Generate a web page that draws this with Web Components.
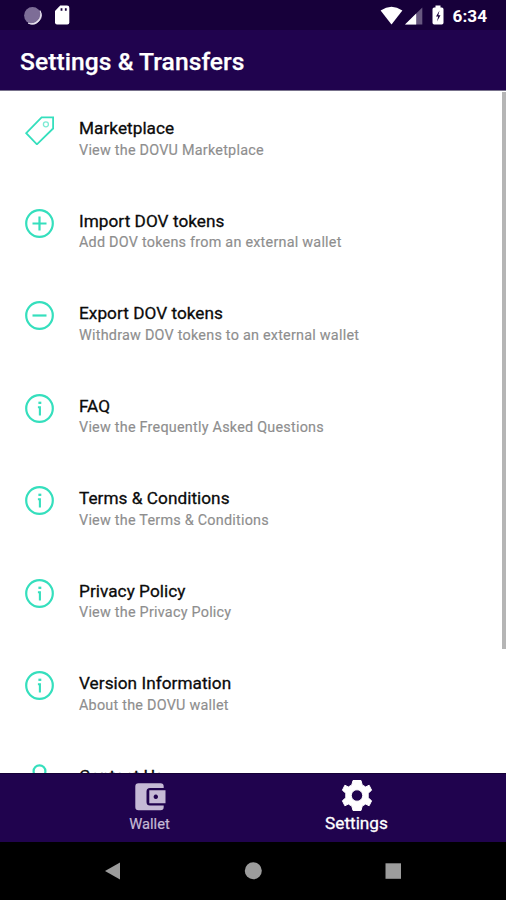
<!DOCTYPE html>
<html lang="en">
<head>
<meta charset="utf-8">
<title>Settings &amp; Transfers</title>
<style>
html,body{margin:0;padding:0;height:100%;overflow:hidden}
body{font-family:Roboto,"Liberation Sans",sans-serif;background:#000}
</style>
</head>
<body>
<wallet-app></wallet-app>
<script>
const define = (name, html) => customElements.define(name, class extends HTMLElement {
  constructor() {
    super();
    const t = document.createElement('template');
    t.innerHTML = typeof html === 'function' ? html(this) : html;
    this.attachShadow({mode: 'open'}).append(t.content.cloneNode(true));
  }
});

const glyphs = {
  tag: '<path d="M1.2 17.2 16.6 1.3h11.5v11.2L11.900 28.300z" stroke-width="1.8"/><circle cx="20.900" cy="8.300" r="2.500" stroke-width="1.300" opacity=".65"/>',
  plus: '<circle cx="14.5" cy="14.5" r="13.3"/><path d="M14.5 7.5v14M7.5 14.5h14"/>',
  minus: '<circle cx="14.5" cy="14.5" r="13.3"/><path d="M7.5 14.5h14"/>',
  info: '<circle cx="14.5" cy="14.5" r="13.3"/><path d="M12.900 13.200h2.200M14.900 12.200v9.300" stroke-width="2.100"/><path d="M13.400 8.800h2.900" stroke-width="2.300"/>',
  person: '<circle cx="14.5" cy="7.2" r="5.900"/><path d="M2 29c0-8 5-13 12.5-13S27 21 27 29"/>'
};

define('status-bar', `<style>
:host{display:flex;align-items:center;height:30px;background:#17003a;color:#fff;box-sizing:border-box;padding:0 19px 0 23px}
.left{display:flex;align-items:center;gap:12px;flex:1}
.right{display:flex;align-items:center}
svg{display:block}
.time{font-size:17.2px;font-weight:700;line-height:30px;margin-left:9px;padding-top:2px}
</style>
<div class="left">
<svg width="19" height="19" viewBox="0 0 19 19"><circle cx="9.5" cy="9.5" r="8.4" fill="#7d6d97"/><path d="M17 4.6A9 9 0 0 1 5.2 17.2 9.6 9.6 0 0 0 17 4.6z" fill="#eee8f4" stroke="#eee8f4" stroke-width=".8"/></svg>
<svg width="17" height="20" viewBox="0 0 17 20"><path d="M6.2.5H13q2.3 0 2.3 2.2v14.8q0 2-2 2H3q-2 0-2-2V6z" fill="#fff"/><path d="M7.500 3.200v2.600M11.800 3.200v2.600" stroke="#17003a" stroke-width="1.800"/></svg>
</div>
<div class="right">
<svg width="23" height="19" viewBox="0 0 23 19"><path d="M.6 4.4Q11.5-3 22.4 4.4L11.5 18.6z" fill="#fff"/></svg>
<svg width="19" height="19" viewBox="0 0 19 19" style="margin-left:1px"><path d="M1 18.5 18.3 1.5v17z" fill="#685880"/><path d="M1 18.5 12.2 7.5v11z" fill="#fff"/></svg>
<svg width="12" height="20" viewBox="0 0 12 20" style="margin-left:9px"><path d="M3.5.5h5v2h1.3q1.7 0 1.7 1.7v13.6q0 1.7-1.7 1.7H2.2Q.5 19.5.5 17.8V4.200q0-1.700 1.700-1.700h1.300z" fill="#fff"/><path d="M7.500 5.500 4 11.500h2.200L5 16.500l3.500-6.300H6.300z" fill="#17003a"/></svg>
<span class="time">6:34</span>
</div>`);

define('title-bar', `<style>
:host{display:flex;align-items:center;height:61px;background:#20034e;border-bottom:1px solid #77718b;padding:2px 20px 0;box-sizing:border-box;color:#fff;font-size:24.6px;font-weight:500;letter-spacing:.06px;-webkit-text-stroke:.25px #fff}
</style><slot></slot>`);

define('setting-row', el => `<style>
:host{display:flex;height:92.5px;box-sizing:border-box;padding:25px 20px 0 25px;gap:25px}
svg{display:block;flex:none;fill:none;stroke:#35dfbd;stroke-width:2.200}
.text{display:flex;flex-direction:column;padding-top:1px;white-space:nowrap}
.t{font-size:17.2px;line-height:22px;color:#0b0b0b;letter-spacing:.04px;-webkit-text-stroke:.3px #0b0b0b}
.s{font-size:14.4px;line-height:22px;padding-top:.6px;color:#8e8e8e;letter-spacing:.23px;-webkit-text-stroke:.15px #8e8e8e}
</style>
<svg width="29" height="29" viewBox="0 0 29 29">${glyphs[el.getAttribute('icon')]}</svg>
<div class="text"><span class="t"><slot></slot></span><span class="s"><slot name="detail"></slot></span></div>`);

define('settings-list', `<style>
:host{display:block;position:relative;height:682px;overflow:hidden;background:#fff}
.bar{position:absolute;right:0;top:1px;width:4.500px;height:557px;background:#b5b5b5}
</style><slot></slot><div class="bar"></div>`);

define('tab-item', `<style>
:host{display:flex;flex-direction:column;align-items:center;width:207px;color:#c5bad5;font-size:14.7px}
:host([active]){color:#fff;font-size:17.2px}
.label{line-height:20px;margin-top:2px;-webkit-text-stroke:.2px}
::slotted(svg){display:block}
:host([active]) .label{margin-top:1px;-webkit-text-stroke:.3px}
</style><slot name="icon"></slot><span class="label"><slot></slot></span>`);

define('tab-bar', `<style>
:host{display:flex;justify-content:center;height:69px;box-sizing:border-box;background:#20034e;border-top:1px solid #160037;padding-top:6px}
</style><slot></slot>`);

define('system-nav', `<style>
:host{display:grid;grid-template-columns:140px 140px 140px;justify-content:center;height:58px;align-items:center;background:#000}
svg{display:block;margin:auto;fill:#9c9c9c}
</style>
<svg width="18" height="18" viewBox="0 0 18 18"><path d="M1 9 16 .6v16.800z"/></svg>
<svg width="18" height="18" viewBox="0 0 18 18"><circle cx="9.300" cy="8.800" r="8.500"/></svg>
<svg width="18" height="18" viewBox="0 0 18 18"><path d="M1.500 1.300h15.500v15.500H1.500z"/></svg>`);

const row = (icon, title, detail) => `<setting-row icon="${icon}">${title}<span slot="detail">${detail}</span></setting-row>`;

define('wallet-app', `<style>
:host{display:flex;flex-direction:column;width:506px;height:900px;overflow:hidden}
:host>*{flex:none}
</style>
<status-bar></status-bar>
<title-bar>Settings &amp; Transfers</title-bar>
<settings-list>
${row('tag', 'Marketplace', 'View the DOVU Marketplace')}
${row('plus', 'Import DOV tokens', 'Add DOV tokens from an external wallet')}
${row('minus', 'Export DOV tokens', 'Withdraw DOV tokens to an external wallet')}
${row('info', 'FAQ', 'View the Frequently Asked Questions')}
${row('info', 'Terms &amp; Conditions', 'View the Terms &amp; Conditions')}
${row('info', 'Privacy Policy', 'View the Privacy Policy')}
${row('info', 'Version Information', 'About the DOVU wallet')}
${row('person', 'Contact Us', '')}
</settings-list>
<tab-bar>
<tab-item>Wallet<svg slot="icon" width="32" height="32" viewBox="0 0 32 32"><path transform="translate(0 .8)" d="M4.500 2.500h22q3.200 0 3.200 3.200v1.500H16q-3.500 0-3.500 3.500v10.600q0 3.500 3.500 3.500h13.700v1.500q0 3.200-3.200 3.200h-22q-3.200 0-3.200-3.200V5.700q0-3.200 3.200-3.200z" fill="#c5bad5"/><path transform="translate(0 .8)" fill-rule="evenodd" d="M15.300 9.500H31.500v13H15.300zM21.800 13.800a2.200 2.200 0 1 0 .01 0z" fill="#c5bad5"/></svg></tab-item>
<tab-item active>Settings<svg slot="icon" width="32" height="32" viewBox="-16 -15.500 32 32"><path fill="#fff" fill-rule="evenodd" stroke="#fff" stroke-linejoin="round" stroke-width="1" d="M-4-15H4L5.200-10.600 8.700-8.500 12.100-10.300 14.600-5.300 11.200-2.300V2.300L14.600 5.300 12.100 10.300 8.700 8.500 5.200 10.600 4 15H-4L-5.200 10.600-8.700 8.500-12.100 10.300-14.600 5.300-11.200 2.300V-2.300L-14.600-5.300-12.100-10.300-8.700-8.500-5.200-10.600zM0-5.700A5.700 5.700 0 1 0 .01-5.700z"/></svg></tab-item>
</tab-bar>
<system-nav></system-nav>`);
</script>
</body>
</html>
